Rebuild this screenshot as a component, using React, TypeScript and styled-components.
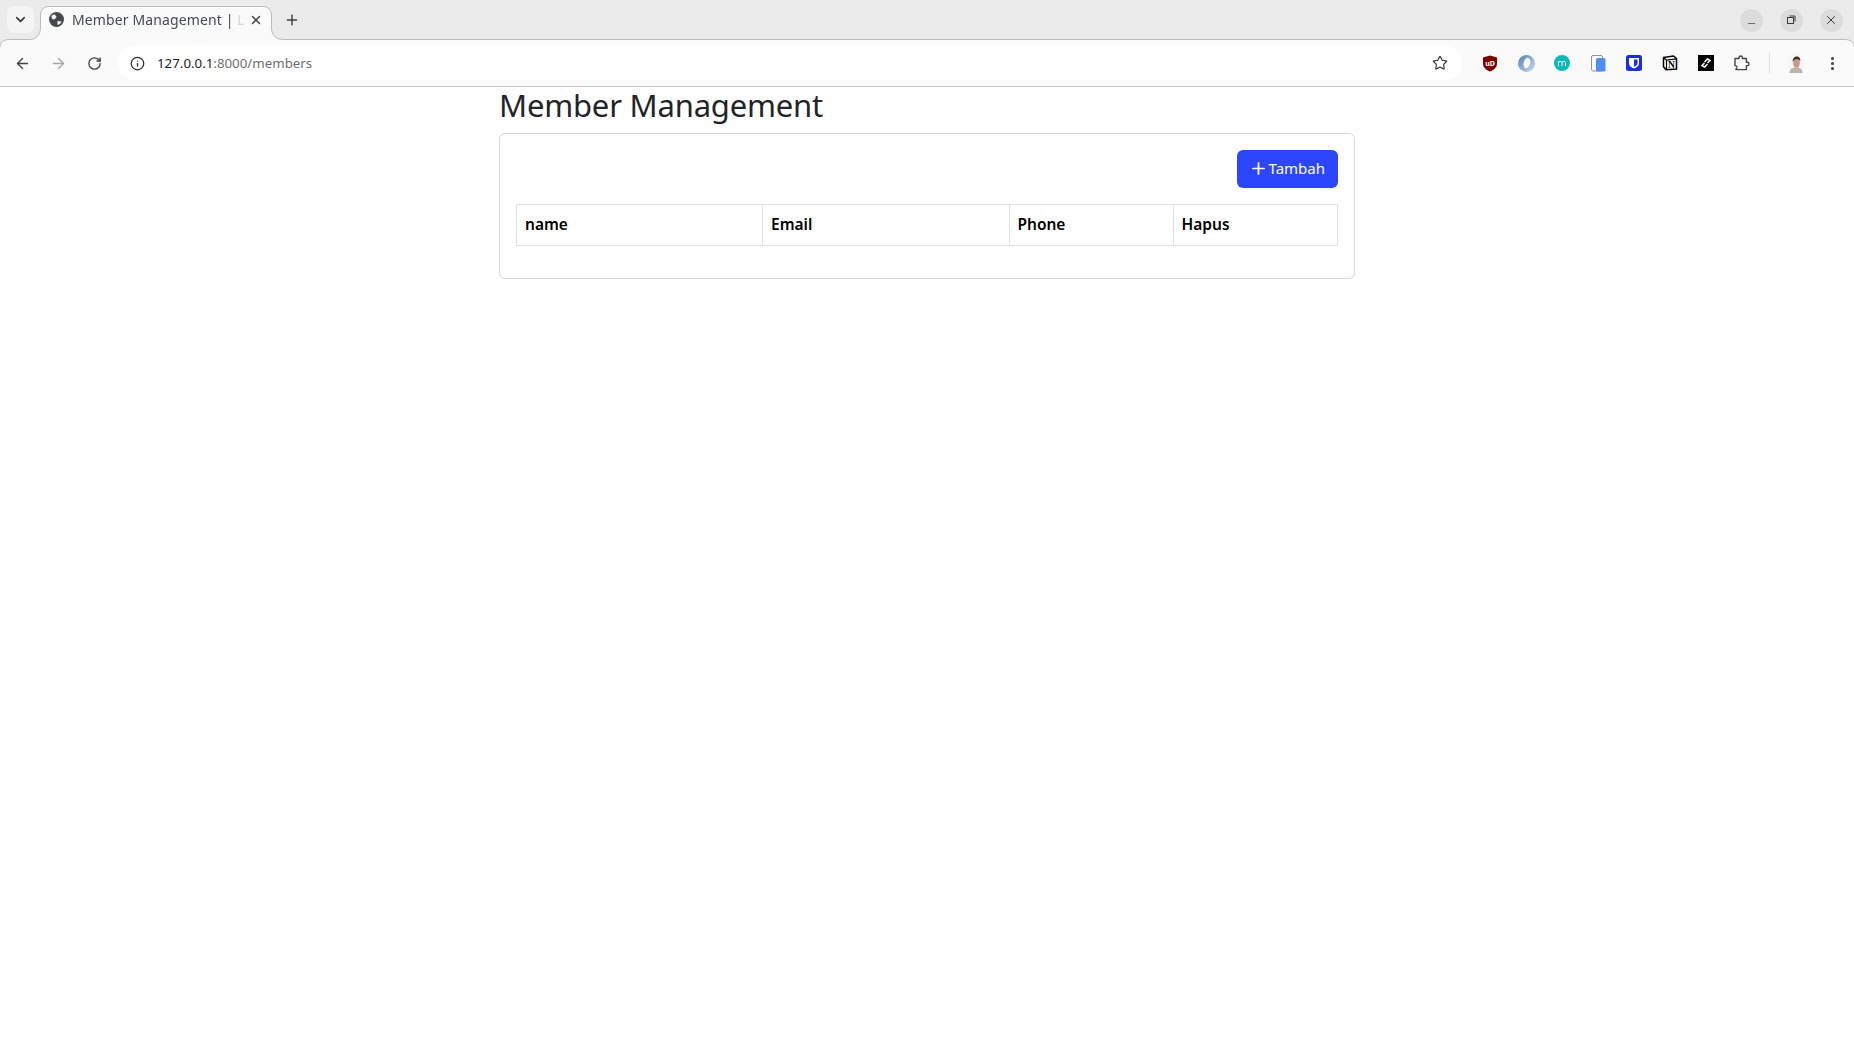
import React from 'react';
import styled, { createGlobalStyle } from 'styled-components';
import {
  ArrowLeft,
  ArrowRight,
  ChevronDown,
  EllipsisVertical,
  Info,
  Minus,
  Plus,
  RotateCw,
  Star,
  X,
} from 'lucide-react';

const GlobalStyle = createGlobalStyle`
  html, body {
    margin: 0;
    padding: 0;
    background: #ffffff;
    font-family: "Noto Sans", "Open Sans", sans-serif;
    color: #212529;
  }
  * {
    box-sizing: border-box;
  }
`;

const Page = styled.div`
  width: 100%;
  min-height: 1048px;
  background: #ffffff;
`;

/* browser chrome */

const Chrome = styled.header`
  position: relative;
  height: 87px;
  background: #ebebeb;
`;

const ChromeOutline = styled.svg`
  position: absolute;
  inset: 0;
  width: 100%;
  height: 100%;
`;

const TabStrip = styled.div`
  position: relative;
  display: flex;
  align-items: center;
  height: 40px;
  padding: 0 0 0 7px;
`;

const TabSearch = styled.div`
  display: flex;
  align-items: center;
  justify-content: center;
  width: 27px;
  height: 27px;
  margin-top: -1px;
  border-radius: 8px;
  background: #f4f4f4;
  color: #333333;
`;

const Tab = styled.div`
  display: flex;
  align-items: center;
  width: 231px;
  height: 34px;
  margin: 6px 0 0 7px;
  padding: 0 9px 7px 8px;
`;

const TabTitle = styled.span`
  margin-left: 8px;
  white-space: nowrap;
  font-size: 14px;
  letter-spacing: 0.12px;
  color: #45494d;
  mask-image: linear-gradient(
    to right,
    #000 calc(100% - 12px),
    rgba(0, 0, 0, 0.2) calc(100% - 6px)
  );
`;

const TabClose = styled.span`
  display: flex;
  margin-left: auto;
  color: #3c3f42;
`;

const NewTab = styled.span`
  display: flex;
  margin: -1px 0 0 12px;
  color: #3c3f42;
`;

const WindowButtons = styled.div`
  display: flex;
  gap: 17px;
  margin-left: auto;
  margin-right: 11.5px;
`;

const WindowButton = styled.span`
  display: flex;
  align-items: center;
  justify-content: center;
  width: 23px;
  height: 23px;
  border-radius: 50%;
  background: #dcdcdc;
  color: #3a3a3a;
`;

const Toolbar = styled.div`
  position: relative;
  display: flex;
  align-items: center;
  height: 47px;
  padding: 0 4px 1px 4px;
`;

const NavButton = styled.span<{ $dim?: boolean }>`
  display: flex;
  align-items: center;
  justify-content: center;
  width: 36px;
  color: ${(props) => (props.$dim ? '#a5a7a9' : '#42464a')};
`;

const Omnibox = styled.div`
  display: flex;
  align-items: center;
  justify-content: space-between;
  width: 1344px;
  height: 34px;
  margin-left: 6px;
  padding: 0 14px 0 11px;
  border-radius: 17px;
  background: #ffffff;
  color: #3c3f42;
`;

const UrlGroup = styled.div`
  display: flex;
  align-items: center;
  gap: 12px;
`;

const InfoBadge = styled.span`
  display: flex;
  align-items: center;
  justify-content: center;
  width: 16px;
  height: 16px;
`;

const Url = styled.span`
  font-size: 13.3px;
  color: #6d7074;
`;

const UrlHost = styled.span`
  color: #1f2124;
`;

const Extensions = styled.div`
  display: flex;
  align-items: center;
  margin-left: auto;
`;

const ExtensionSlot = styled.span`
  display: flex;
  align-items: center;
  justify-content: center;
  width: 36px;
  height: 34px;
  color: #42464a;
`;

const ToolbarDivider = styled.span`
  width: 1px;
  height: 22px;
  margin: 0 8.5px;
  background: #e2e2e2;
`;

/* page content */

const Main = styled.main`
  width: 856px;
  margin: 0 auto;
`;

const Title = styled.h1`
  margin: 0 0 10px;
  font-size: 31px;
  font-weight: 400;
  line-height: 36px;
  letter-spacing: -0.2px;
  color: #212529;
`;

const Card = styled.section`
  padding: 16px;
  border: 1px solid #d6d6d6;
  border-radius: 6px;
  background: #ffffff;
`;

const Actions = styled.div`
  display: flex;
  justify-content: flex-end;
  margin-bottom: 16px;
`;

const AddButton = styled.button`
  display: flex;
  align-items: center;
  gap: 1px;
  height: 38px;
  padding: 0 13px 2px 12px;
  border: none;
  border-radius: 6px;
  background: #2c46ff;
  color: #ffffff;
  font-family: inherit;
  font-size: 15px;
  cursor: pointer;
`;

const Table = styled.table`
  width: 821px;
  margin-bottom: 16px;
  border-collapse: collapse;
  table-layout: fixed;
`;

const HeadCell = styled.th<{ $width: number }>`
  width: ${(props) => props.$width}px;
  height: 41px;
  padding: 6px 8px 8px;
  border: 1px solid #dee2e6;
  text-align: left;
  font-size: 15.5px;
  font-weight: 600;
  color: #000000;
`;

const columns = [
  { label: 'name', width: 246 },
  { label: 'Email', width: 246.5 },
  { label: 'Phone', width: 164 },
  { label: 'Hapus', width: 164.5 },
];

const GlobeIcon = () => (
  <svg width="15" height="15" viewBox="0 0 16 16">
    <circle cx="8" cy="8" r="8" fill="#45494d" />
    <path
      d="M2.500 4 6 2.500 8 5 6.500 7.500 4.500 8 3 7zM9 9.500l4.500.5-2 3-2.500.5z"
      fill="#f2f2f2"
    />
  </svg>
);

const RestoreIcon = () => (
  <svg width="10" height="10" viewBox="0 0 10 10" fill="none" stroke="#3a3a3a">
    <rect x="1.500" y="2.500" width="6" height="6" />
    <path d="M3.500 1h5.500v5.500" />
  </svg>
);

const UBlockIcon = () => (
  <svg width="16" height="17" viewBox="0 0 16 17">
    <path d="M8 .5 15 2.500v6.500c0 3.500-3.500 6-7 7.500-3.500-1.500-7-4-7-7.500V2.500z" fill="#800000" />
    <text x="8" y="10.500" textAnchor="middle" fontSize="7" fontWeight="700" fill="#ffffff">
      uD
    </text>
  </svg>
);

const JsonRingIcon = () => (
  <svg width="17" height="17" viewBox="0 0 16 16">
    <defs>
      <linearGradient id="ring" x1="0" y1="0" x2="1" y2="1">
        <stop offset="0" stopColor="#5080b8" />
        <stop offset="1" stopColor="#d0deec" />
      </linearGradient>
    </defs>
    <circle cx="8" cy="8" r="8" fill="url(#ring)" />
    <ellipse cx="8.300" cy="7.500" rx="3" ry="5" fill="#fafafa" transform="rotate(15 8 8)" />
  </svg>
);

const MeetIcon = () => (
  <svg width="16" height="16" viewBox="0 0 16 16">
    <circle cx="8" cy="8" r="8" fill="#0fb8b8" />
    <path d="M4.500 11V6.500M4.500 7.500c0-1.500 3.500-1.500 3.500 0V11M8 7.500c0-1.500 3.500-1.500 3.500 0V11" stroke="#e6fbfb" fill="none" />
  </svg>
);

const DevicesIcon = () => (
  <svg width="15" height="17" viewBox="0 0 15 17">
    <rect x=".5" y=".5" width="11" height="15.500" rx="1.500" fill="#fafafa" stroke="#8d93a0" />
    <rect x="5" y="3" width="9.500" height="13.500" rx="1.500" fill="#4f8ff2" />
  </svg>
);

const BitwardenIcon = () => (
  <svg width="16" height="16" viewBox="0 0 16 16">
    <rect width="16" height="16" rx="2.500" fill="#1c2fd8" />
    <path d="M3 3h10v5.500c0 2.500-2.500 4-5 5-2.500-1-5-2.500-5-5z" fill="#ffffff" />
    <path d="M8 4.500h3.500v4c0 1.500-1.500 2.500-3.500 3.200z" fill="#1c2fd8" />
  </svg>
);

const NotionIcon = () => (
  <svg width="16" height="16" viewBox="0 0 16 16">
    <path d="M1.500 2.500 11.500 1l3 2.500V14l-10.500.8-2.500-3z" fill="#ffffff" stroke="#000000" strokeWidth="1.500" />
    <path d="M2 3 4.500 5l10-1.200M4.500 5v9" fill="none" stroke="#000000" strokeWidth="1.200" />
    <text x="9.500" y="12.700" textAnchor="middle" fontSize="9.500" fontWeight="700" fontFamily="Liberation Serif" fill="#000000">
      N
    </text>
  </svg>
);

const LinksIcon = () => (
  <svg width="16" height="16" viewBox="0 0 16 16">
    <rect width="16" height="16" fill="#000000" />
    <path d="M6.500 7 9.500 4 12 5.500 9.500 8M9.500 9 6.500 12 4 10.500 6.500 8" fill="none" stroke="#ffffff" strokeWidth="1.500" />
  </svg>
);

const PuzzleIcon = () => (
  <svg width="16" height="16" viewBox="0 0 16 16" fill="none" stroke="#42464a" strokeWidth="1.400" strokeLinejoin="round">
    <path d="M1 3.500h4V2.700a1.700 1.700 0 0 1 3.400 0v.8h4v3.700h.9a1.700 1.700 0 0 1 0 3.400h-.9v4H1.800l1-1.500c.5-1 0-2.500-1.800-2.500z" />
  </svg>
);

const AvatarIcon = () => (
  <svg width="20" height="20" viewBox="0 0 20 20">
    <circle cx="10" cy="10" r="10" fill="#f6f6f6" />
    <path d="M3.500 20c0-4 2.500-5.500 6.500-5.500s6.500 1.500 6.500 5.500z" fill="#b8b4ae" />
    <ellipse cx="10.500" cy="10" rx="3.400" ry="4.800" fill="#c99a80" />
    <path d="M6.800 9c-.5-4 2-5.500 4-5.500s4 1.500 3.400 5c-.5-1.500-1.500-2.500-3.400-2.500-1.500 0-3.300 1-4 3z" fill="#3b2e2a" />
  </svg>
);

const App: React.FC = () => {
  return (
    <Page>
      <GlobalStyle />
      <Chrome>
        <ChromeOutline viewBox="0 0 1854 87">
          <path
            d="M0 47C0 42 4 39.500 9 39.500H29C36 39.500 40.500 35 40.500 28V15C40.500 9.500 44.500 6.500 49 6.500H263C267.500 6.500 271.500 9.500 271.500 15V28C271.500 35 276 39.500 283 39.500H1845C1850 39.500 1854 42 1854 47V87H0Z"
            fill="#fafafa"
          />
          <path
            d="M0 47C0 42 4 39.500 9 39.500H29C36 39.500 40.500 35 40.500 28V15C40.500 9.500 44.500 6.500 49 6.500H263C267.500 6.500 271.500 9.500 271.500 15V28C271.500 35 276 39.500 283 39.500H1845C1850 39.500 1854 42 1854 47"
            fill="none"
            stroke="#bcbcbc"
          />
          <path d="M0 86.500H1854" stroke="#c8c8c8" />
        </ChromeOutline>
        <TabStrip>
          <TabSearch>
            <ChevronDown size={15} strokeWidth={2.500} />
          </TabSearch>
          <Tab>
            <GlobeIcon />
            <TabTitle>Member Management | L</TabTitle>
            <TabClose>
              <X size={14} strokeWidth={2.500} />
            </TabClose>
          </Tab>
          <NewTab>
            <Plus size={16} strokeWidth={2.200} />
          </NewTab>
          <WindowButtons>
            <WindowButton>
              <Minus size={11} strokeWidth={1.500} style={{ marginTop: 6 }} />
            </WindowButton>
            <WindowButton>
              <RestoreIcon />
            </WindowButton>
            <WindowButton>
              <X size={14} strokeWidth={1.700} />
            </WindowButton>
          </WindowButtons>
        </TabStrip>
        <Toolbar>
          <NavButton>
            <ArrowLeft size={17} strokeWidth={2} />
          </NavButton>
          <NavButton $dim>
            <ArrowRight size={17} strokeWidth={2} />
          </NavButton>
          <NavButton>
            <RotateCw size={15} strokeWidth={2.200} />
          </NavButton>
          <Omnibox>
            <UrlGroup>
              <InfoBadge>
                <Info size={15} strokeWidth={2} color="#2a2c2f" />
              </InfoBadge>
              <Url>
                <UrlHost>127.0.0.1</UrlHost>:8000/members
              </Url>
            </UrlGroup>
            <Star size={16} strokeWidth={1.800} />
          </Omnibox>
          <Extensions>
            <ExtensionSlot><UBlockIcon /></ExtensionSlot>
            <ExtensionSlot><JsonRingIcon /></ExtensionSlot>
            <ExtensionSlot><MeetIcon /></ExtensionSlot>
            <ExtensionSlot><DevicesIcon /></ExtensionSlot>
            <ExtensionSlot><BitwardenIcon /></ExtensionSlot>
            <ExtensionSlot><NotionIcon /></ExtensionSlot>
            <ExtensionSlot><LinksIcon /></ExtensionSlot>
            <ExtensionSlot><PuzzleIcon /></ExtensionSlot>
            <ToolbarDivider />
            <ExtensionSlot><AvatarIcon /></ExtensionSlot>
            <ExtensionSlot><EllipsisVertical size={17} strokeWidth={2.400} /></ExtensionSlot>
          </Extensions>
        </Toolbar>
      </Chrome>
      <Main>
        <Title>Member Management</Title>
        <Card>
          <Actions>
            <AddButton>
              <Plus size={19} strokeWidth={2.200} />
              Tambah
            </AddButton>
          </Actions>
          <Table>
            <thead>
              <tr>
                {columns.map((column) => (
                  <HeadCell key={column.label} $width={column.width}>
                    {column.label}
                  </HeadCell>
                ))}
              </tr>
            </thead>
          </Table>
        </Card>
      </Main>
    </Page>
  );
};

export default App;
